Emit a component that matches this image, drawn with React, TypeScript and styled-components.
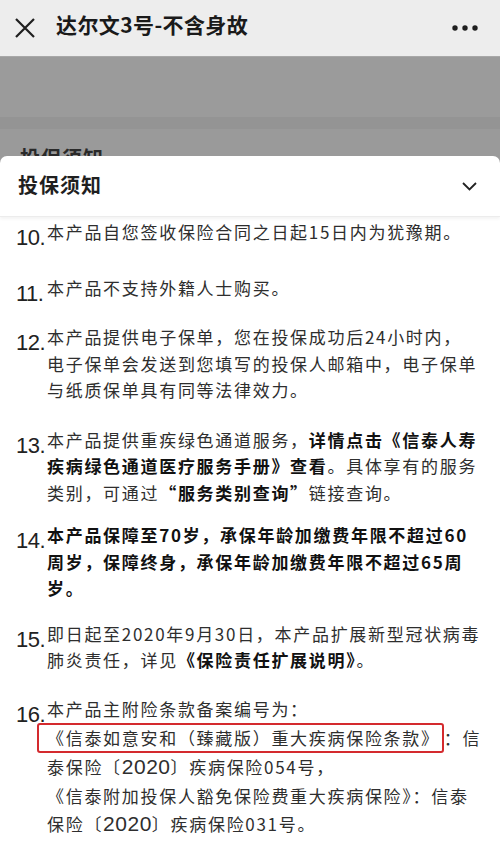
import React from "react";
import styled, { createGlobalStyle } from "styled-components";

const GlobalStyle = createGlobalStyle`
  html, body {
    margin: 0;
    padding: 0;
    background: #9a9a9a;
  }
  body {
    font-family: "Noto Sans CJK SC", "Noto Sans", sans-serif;
  }
`;

const Page = styled.div`
  width: 500px;
  height: 847px;
  overflow: hidden;
  display: flex;
  flex-direction: column;
  background: #9a9a9a;
`;

const TopBar = styled.header`
  height: 56px;
  flex: 0 0 auto;
  display: flex;
  align-items: center;
  padding: 0 22px 0 14px;
  background: #ededed;
  border-bottom: 1px solid #a8a8a8;
`;

const IconButton = styled.span`
  display: flex;
  align-items: center;
  justify-content: center;
`;

const Title = styled.h1`
  flex: 1;
  margin: 0 0 0 20px;
  font-size: 21px;
  font-weight: 700;
  letter-spacing: 0.4px;
  color: #1a1a1a;
  line-height: 1;
  padding-bottom: 8px;
`;

const Backdrop = styled.div`
  height: 99px;
  flex: 0 0 auto;
  overflow: hidden;
  background: linear-gradient(
    to bottom,
    #9b9b9b 0,
    #9b9b9b 60px,
    #949494 60px,
    #949494 72px,
    #9a9a9a 72px
  );
`;

const BehindTitle = styled.div`
  padding: 89px 0 0 20px;
  font-size: 20px;
  line-height: 24px;
  font-weight: 600;
  letter-spacing: 1px;
  color: #2a2a2a;
`;

const Sheet = styled.section`
  flex: 1;
  background: #fff;
  border-radius: 7px 7px 0 0;
  overflow: hidden;
`;

const SheetHeader = styled.div`
  height: 60px;
  display: flex;
  align-items: center;
  justify-content: space-between;
  padding: 0 23px 0 18px;
  border-bottom: 1px solid #ececec;
  box-shadow: 0 2px 3px rgba(0, 0, 0, 0.05);
`;

const SheetTitle = styled.h2`
  margin: 0;
  font-size: 20px;
  font-weight: 600;
  letter-spacing: 1px;
  color: #1f1f1f;
  padding-bottom: 4px;
`;

const List = styled.div`
  padding: 2px 16px 0 16px;
`;

const Item = styled.div<{ $gap: number }>`
  display: flex;
  align-items: flex-start;
  margin-top: ${(p) => p.$gap}px;
`;

const Num = styled.div<{ $lh?: number }>`
  flex: 0 0 31px;
  font-family: "Liberation Sans", Arial, sans-serif;
  font-size: 22px;
  line-height: ${(p) => p.$lh ?? 26.5}px;
  padding-top: 6px;
  margin-bottom: -6px;
  letter-spacing: -0.5px;
  color: #222;
`;

const Text = styled.div<{ $lh?: number }>`
  font-size: 17px;
  line-height: ${(p) => p.$lh ?? 26.5}px;
  letter-spacing: 1.7px;
  white-space: nowrap;
  color: #2e2e2e;
`;

const Strong = styled.b`
  font-weight: 700;
  color: #111;
`;

const Digits = styled.span`
  font-family: "Liberation Sans", Arial, sans-serif;
  font-size: 21px;
  letter-spacing: 0.5px;
`;

const Marked = styled.span`
  display: inline-block;
  margin-left: -10px;
  padding: 0 2px 0 8px;
  line-height: 26px;
  border: 2px solid #d42a2e;
  border-radius: 3px;
`;

const CloseIcon = () => (
  <svg width="22" height="22" viewBox="0 0 22 22">
    <path d="M2 2 L20 20 M20 2 L2 20" stroke="#1f1f1f" strokeWidth="2.2" fill="none" />
  </svg>
);

const MoreIcon = () => (
  <svg width="26" height="8" viewBox="0 0 26 8">
    <circle cx="3" cy="4" r="2.7" fill="#1f1f1f" />
    <circle cx="13" cy="4" r="2.7" fill="#1f1f1f" />
    <circle cx="23" cy="4" r="2.7" fill="#1f1f1f" />
  </svg>
);

const Chevron = () => (
  <svg width="15" height="9" viewBox="0 0 15 9">
    <polyline points="1,1 7.5,7.5 14,1" stroke="#222" strokeWidth="1.8" fill="none" />
  </svg>
);

export default function App() {
  return (
    <>
      <GlobalStyle />
      <Page>
        <TopBar>
          <IconButton>
            <CloseIcon />
          </IconButton>
          <Title>达尔文3号-不含身故</Title>
          <IconButton>
            <MoreIcon />
          </IconButton>
        </TopBar>
        <Backdrop>
          <BehindTitle>投保须知</BehindTitle>
        </Backdrop>
        <Sheet>
          <SheetHeader>
            <SheetTitle>投保须知</SheetTitle>
            <Chevron />
          </SheetHeader>
          <List>
            <Item $gap={0}>
              <Num>10.</Num>
              <Text>本产品自您签收保险合同之日起15日内为犹豫期。</Text>
            </Item>
            <Item $gap={29}>
              <Num>11.</Num>
              <Text>本产品不支持外籍人士购买。</Text>
            </Item>
            <Item $gap={23}>
              <Num>12.</Num>
              <Text>
                本产品提供电子保单，您在投保成功后24小时内，
                <br />
                电子保单会发送到您填写的投保人邮箱中，电子保单
                <br />
                与纸质保单具有同等法律效力。
              </Text>
            </Item>
            <Item $gap={23}>
              <Num>13.</Num>
              <Text>
                本产品提供重疾绿色通道服务，<Strong>详情点击《信泰人寿</Strong>
                <br />
                <Strong>疾病绿色通道医疗服务手册》查看</Strong>。具体享有的服务
                <br />
                类别，可通过<Strong>“服务类别查询”</Strong>链接查询。
              </Text>
            </Item>
            <Item $gap={16}>
              <Num>14.</Num>
              <Text>
                <Strong>
                  本产品保障至70岁，承保年龄加缴费年限不超过60
                  <br />
                  周岁，保障终身，承保年龄加缴费年限不超过65周
                  <br />
                  岁。
                </Strong>
              </Text>
            </Item>
            <Item $gap={19}>
              <Num>15.</Num>
              <Text>
                即日起至2020年9月30日，本产品扩展新型冠状病毒
                <br />
                肺炎责任，详见<Strong>《保险责任扩展说明》</Strong>。
              </Text>
            </Item>
            <Item $gap={21}>
              <Num $lh={28}>16.</Num>
              <Text $lh={28.5}>
                本产品主附险条款备案编号为：
                <br />
                <Marked>《信泰如意安和（臻藏版）重大疾病保险条款》</Marked>：信
                <br />
                泰保险〔<Digits>2020</Digits>〕疾病保险054号，
                <br />
                《信泰附加投保人豁免保险费重大疾病保险》：信泰
                <br />
                保险〔<Digits>2020</Digits>〕疾病保险031号。
              </Text>
            </Item>
          </List>
        </Sheet>
      </Page>
    </>
  );
}
